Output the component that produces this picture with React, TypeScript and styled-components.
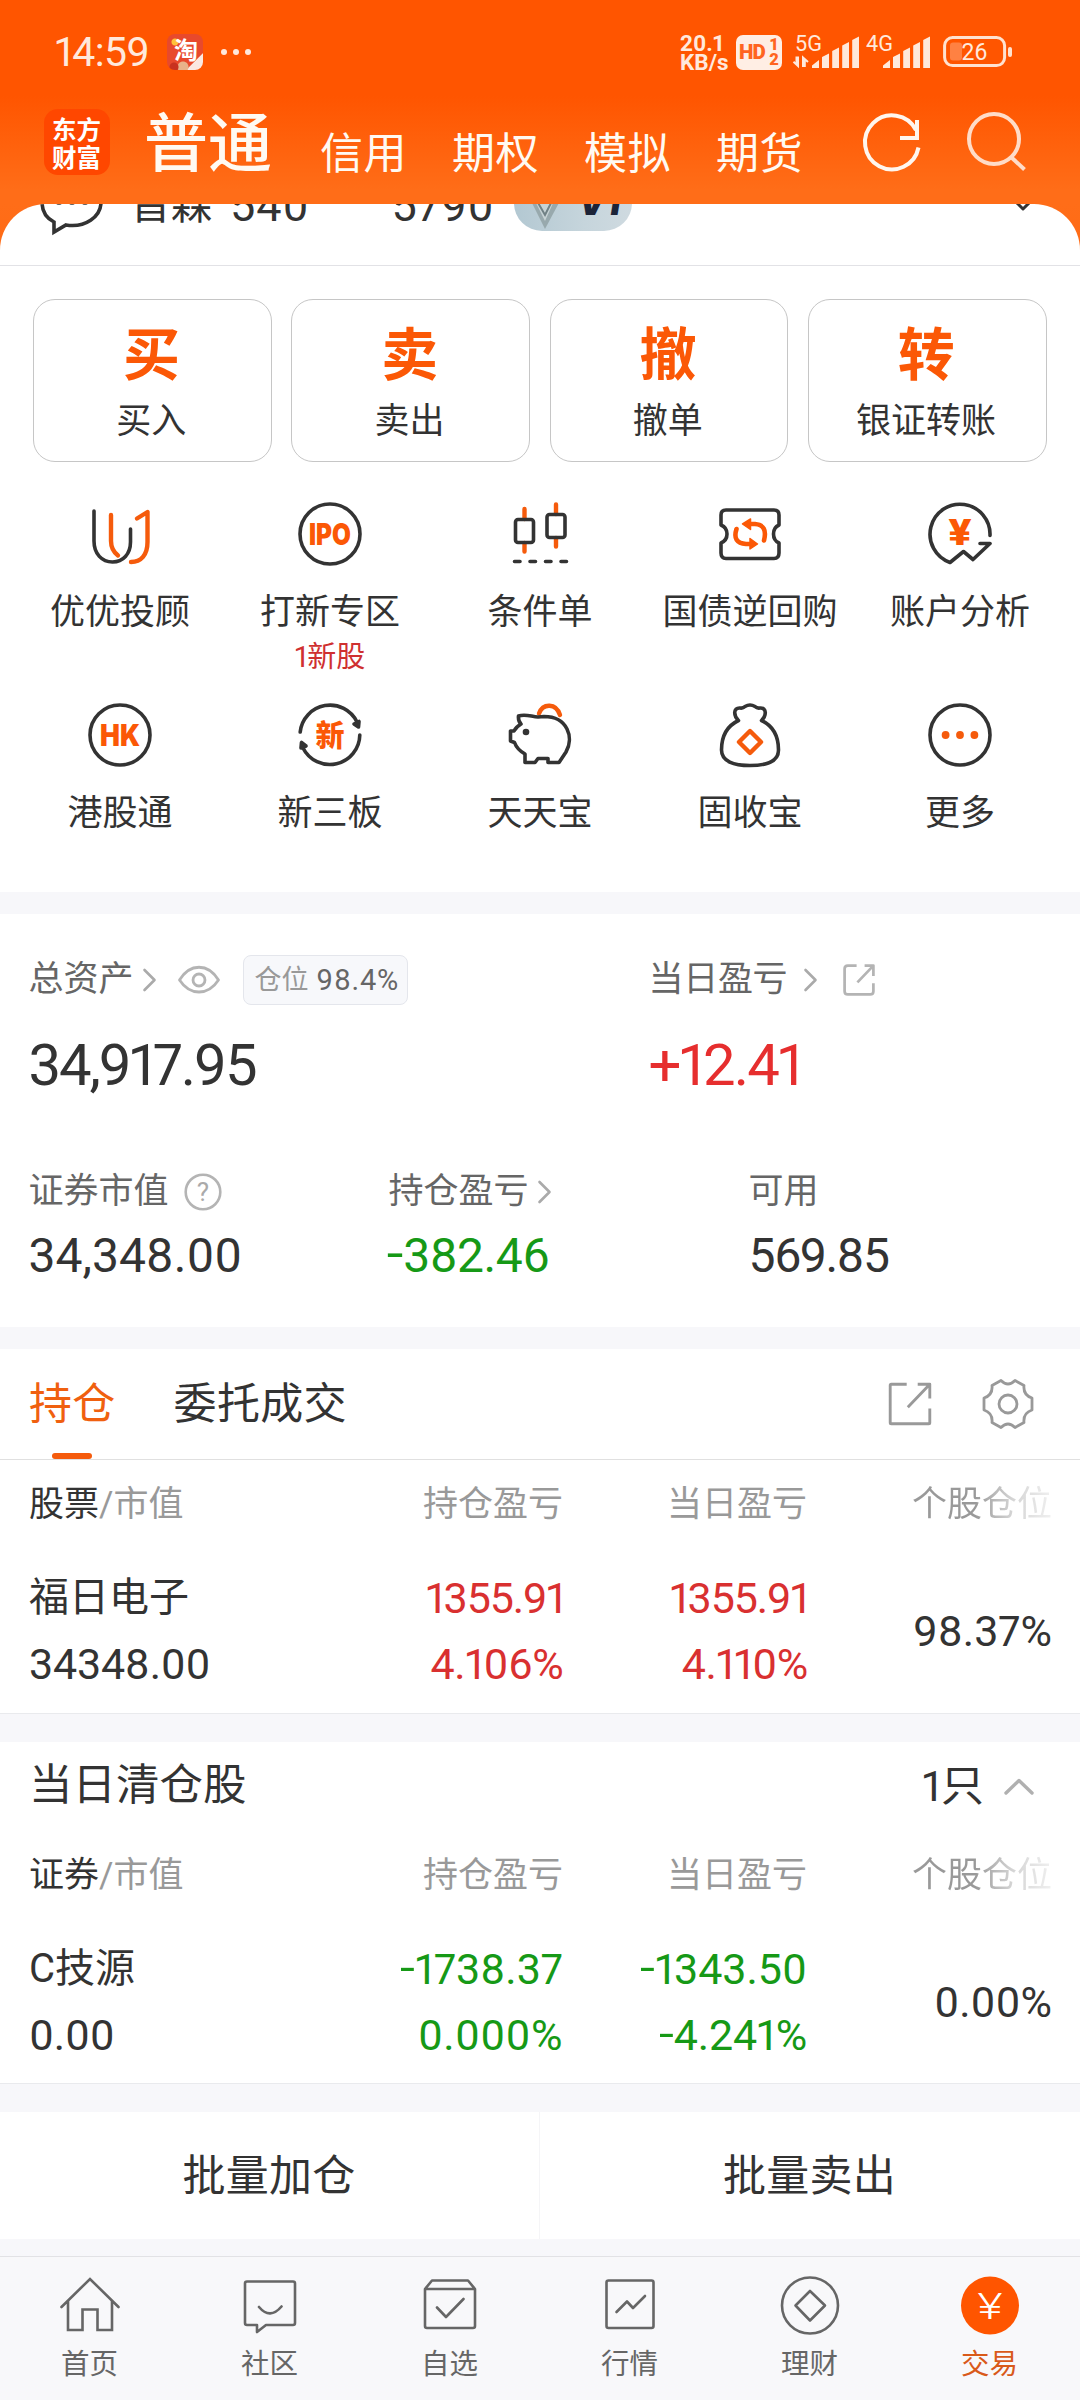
import React from 'react';
import styled, { createGlobalStyle } from 'styled-components';

const ORANGE = '#f55b0c';
const INK = '#333333';
const RED = '#d93030';
const GREEN = '#169916';
const SANS = "Roboto, 'Noto Sans CJK SC', sans-serif";

const GlobalStyle = createGlobalStyle`
  * { box-sizing: border-box; }
  body { margin: 0; background: #f7f7fa; }
  svg { display: block; flex: none; overflow: visible; }
`;

const Screen = styled.div`
  width: 1080px;
  height: 2400px;
  overflow: hidden;
  display: flex;
  flex-direction: column;
  background: #f7f7fa;
  font-family: ${SANS};
  font-variant-numeric: proportional-nums;
  color: ${INK};
  white-space: nowrap;
`;

/* ---------- generic text ---------- */
const Text = styled.span<{ $size?: number; $color?: string; $ls?: number; $weight?: number }>`
  font-size: ${p => p.$size ?? 35}px;
  line-height: 1.2;
  color: ${p => p.$color ?? INK};
  letter-spacing: ${p => p.$ls ?? 0}px;
  font-weight: ${p => p.$weight ?? 400};
`;
const MinusSign = styled.span`
  display: inline-block;
  transform: translateY(-0.04em) scaleX(1.25);
  transform-origin: 100% 50%;
  margin-left: 0.04em;
`;
const Signed = ({ children }: { children: string }) =>
  children.startsWith('-') ? <><MinusSign>-</MinusSign>{children.slice(1)}</> : <>{children}</>;

/* ---------- header ---------- */
const Header = styled.header`
  flex: none;
  background: linear-gradient(#ff5500 0, #ff5500 96px, #ff6d18 190px, #ff6d18 204px, #ff6a14 265px);
`;
const StatusBar = styled.div`
  height: 104px;
  padding: 0 68px 0 55px;
  display: flex;
  align-items: center;
  color: #ffe9dc;
`;
const Clock = styled.span`
  width: 112px;
  font-size: 41px;
  line-height: 48px;
  letter-spacing: -0.6px;
  color: #ffe9dc;
`;
const TaoBadge = styled.div`
  width: 36px;
  height: 36px;
  border-radius: 8px;
  overflow: hidden;
  background: radial-gradient(circle at 8px 8px, #ffc23a 0 3px, transparent 4px),
    radial-gradient(circle at 7px 33px, #c8321f 0 4px, transparent 5px),
    radial-gradient(circle at 16px 33px, #e8b28a 0 5px, transparent 6px),
    linear-gradient(135deg, #e8492c 0 76%, #fbe9e2 77%);
  color: #fff;
  font: 700 24px/29px 'Noto Sans CJK SC', sans-serif;
  text-align: right;
  padding-right: 5px;
`;
const Dots = styled.div`
  display: flex;
  gap: 6px;
  margin-left: 18px;
  i { width: 6px; height: 6px; border-radius: 3px; background: #ffe9dc; }
`;
const StatusRight = styled.div`
  margin-left: auto;
  display: flex;
  align-items: center;
`;
const Speed = styled.div`
  width: 56px;
  font-size: 22.5px;
  line-height: 19px;
  font-weight: 700;
  display: flex;
  flex-direction: column;
  padding-top: 2px;
`;
const HdBox = styled.div`
  width: 46px;
  height: 35px;
  margin-right: 11px;
  padding: 0 4px 0 3px;
  border-radius: 7px;
  background: #ffeee4;
  color: #ff6420;
  display: flex;
  align-items: center;
  justify-content: space-between;
  font: 900 20.5px/34px Roboto, sans-serif;
  letter-spacing: -0.8px;
`;
const HdStack = styled.span`
  display: flex;
  flex-direction: column;
  font-size: 16.5px;
  line-height: 15px;
`;

const NavBar = styled.nav`
  height: 100px;
  padding-left: 44px;
  display: flex;
  align-items: flex-start;
`;
const Logo = styled.div`
  width: 66px;
  height: 66px;
  margin-top: 5px;
  padding: 6px 0 0 8px;
  border-radius: 14px;
  background: #ff4700;
  color: #fff;
  font: 700 24.5px/27.5px 'Noto Sans CJK SC', sans-serif;
  display: flex;
  flex-direction: column;
`;
const NavMain = styled.span`
  margin: 3px 0 0 34px;
  width: 176px;
  font-size: 64px;
  line-height: 76px;
  font-weight: 500;
  color: #fffaf2;
`;
const NavTabs = styled.div`
  margin-top: 24px;
  display: flex;
  gap: 45px;
`;
const NavTab = styled.span`
  width: 87px;
  font-size: 43px;
  line-height: 52px;
  letter-spacing: 0.5px;
  color: #fffaf2;
`;
const NavIcons = styled.div`
  display: flex;
  margin: 8px 0 0 59px;
  gap: 42px;
`;

/* ---------- account strip (scrolled beneath the header) ---------- */
const Sheet = styled.div`
  height: 62px;
  border-radius: 46px 46px 0 0;
  background: #fff;
  border-bottom: 1px solid #e2e2e6;
  overflow: hidden;
`;
const AccountRow = styled.div`
  height: 60px;
  margin-top: -28px;
  padding: 0 45px 0 40px;
  display: flex;
  align-items: center;
`;
const VipTag = styled.div`
  width: 118px;
  height: 56px;
  margin: -7px 0 0 20px;
  padding: 0 0 0 16px;
  border-radius: 28px;
  background: linear-gradient(90deg, #b3c8d2, #c6d5dc 60%, #cfdae0);
  display: flex;
  align-items: center;
  gap: 16px;
  color: #1c2438;
  font: italic 900 34px/58px Inter, sans-serif;
`;

/* ---------- quick trade ---------- */
const Panel = styled.section`
  flex: none;
  background: #fff;
`;
const QuickPanel = styled(Panel)`
  height: 626px;
  padding-top: 33px;
`;
const TradeCards = styled.div`
  padding: 0 33.5px 0 33px;
  display: grid;
  grid-template-columns: repeat(4, 1fr);
  gap: 19.5px;
`;
const TradeCard = styled.button`
  height: 163px;
  padding: 21px 2px 0 0;
  border: 1px solid #c6c6c6;
  border-radius: 22px;
  background: #fff;
  display: flex;
  flex-direction: column;
  align-items: center;
  font-family: ${SANS};
`;
const TradeGlyph = styled.span`
  font-size: 57px;
  line-height: 70px;
  font-weight: 700;
  color: #fb5806;
`;
const TradeName = styled.span`
  margin-top: 10px;
  font-size: 35px;
  line-height: 42px;
  color: ${INK};
`;
const ServiceGrid = styled.div`
  margin: 40px 15px 0;
  display: grid;
  grid-template-columns: repeat(5, 210px);
  grid-auto-rows: 201px;
`;
const Service = styled.div`
  display: flex;
  flex-direction: column;
  align-items: center;
`;
const ServiceName = styled.span`
  margin-top: 26px;
  font-size: 35px;
  line-height: 42px;
`;
const ServiceNote = styled.span`
  margin-top: 6px;
  font-size: 29px;
  line-height: 34px;
  color: #cf3030;
`;

/* ---------- assets ---------- */
const AssetPanel = styled(Panel)`
  height: 413px;
  margin-top: 22px;
  padding: 41px 30px 0 28.5px;
`;
const AssetTop = styled.div`
  display: grid;
  grid-template-columns: 620px 1fr;
`;
const AssetTriple = styled.div`
  margin-top: 70px;
  display: grid;
  grid-template-columns: repeat(3, 360px);
`;
const LabelRow = styled.div<{ $h: number }>`
  height: ${p => p.$h}px;
  display: flex;
  align-items: center;
`;
const Gap = styled.span<{ $w: number }>`
  flex: none;
  width: ${p => p.$w}px;
`;
const Spring = styled.span`
  flex: 1;
`;
const PositionTag = styled.span`
  height: 50px;
  width: 165px;
  padding-left: 11px;
  border: 1px solid #e4e6ec;
  border-radius: 8px;
  background: #f7f8fb;
  display: flex;
  align-items: center;
  gap: 8px;
`;
const BigValue = styled.div<{ $color?: string; $ls?: number }>`
  margin-top: 24px;
  font-size: 58px;
  line-height: 72px;
  letter-spacing: ${p => p.$ls ?? 0}px;
  color: ${p => p.$color ?? INK};
`;
const MidValue = styled.div<{ $color?: string; $ls?: number }>`
  margin-top: 13px;
  font-size: 48px;
  line-height: 60px;
  letter-spacing: ${p => p.$ls ?? 0}px;
  color: ${p => p.$color ?? INK};
`;

/* ---------- holdings ---------- */
const TabPanel = styled(Panel)`
  height: 111px;
  margin-top: 22px;
  padding: 0 46px 0 29px;
  border-bottom: 1px solid #e0e0e0;
  display: flex;
`;
const Tab = styled.div<{ $active?: boolean }>`
  height: 110px;
  padding-top: 29px;
  margin-right: 58px;
  display: flex;
  flex-direction: column;
  align-items: center;
  font-size: 43px;
  line-height: 52px;
  letter-spacing: 0.3px;
  color: ${p => (p.$active ? '#f0600f' : INK)};
  &::after {
    content: '';
    display: ${p => (p.$active ? 'block' : 'none')};
    margin-top: 23px;
    width: 40px;
    height: 6px;
    border-radius: 3px;
    background: ${ORANGE};
  }
`;
const TabTools = styled.div`
  margin-left: auto;
  padding-top: 3px;
  display: flex;
  align-items: center;
  gap: 50px;
  height: 106px;
`;
const TablePanel = styled(Panel)<{ $h: number; $top?: number }>`
  height: ${p => p.$h}px;
  margin-top: ${p => p.$top ?? 0}px;
  padding: 0 28px 0 29px;
  border-bottom: 1px solid #e9eaed;
`;
const TableRow = styled.div<{ $h: number }>`
  height: ${p => p.$h}px;
  display: grid;
  grid-template-columns: 244px 290px 244px 245px;
  align-items: center;
`;
const Cell = styled.div<{ $right?: boolean }>`
  display: flex;
  flex-direction: column;
  text-align: ${p => (p.$right ? 'right' : 'left')};
`;
const Line = styled.span<{ $size?: number; $color?: string; $ls?: number }>`
  font-size: ${p => p.$size ?? 43}px;
  line-height: 66px;
  letter-spacing: ${p => p.$ls ?? 0}px;
  margin-right: ${p => p.$ls ?? 0}px;
  color: ${p => p.$color ?? INK};
`;
const Head = styled.span<{ $fade?: boolean }>`
  font-size: 35px;
  line-height: 42px;
  color: #999;
  ${p => p.$fade && `
    background: linear-gradient(90deg, #999 0, #999 168px, #d4d4d4 205px, #f0f0f0 100%);
    background-clip: text;
    -webkit-text-fill-color: transparent;
  `}
  b { font-weight: 400; color: ${INK}; }
`;
const ClearedTitle = styled.div`
  height: 89px;
  display: flex;
  align-items: center;
  justify-content: space-between;
  padding-right: 18px;
`;
const ClearedCount = styled.div`
  display: flex;
  align-items: center;
  gap: 20px;
`;

/* ---------- batch buttons & tab bar ---------- */
const BatchRow = styled.div`
  flex: none;
  height: 127px;
  margin-top: 28px;
  background: #fff;
  display: grid;
  grid-template-columns: 540px 540px;
`;
const BatchButton = styled.button`
  border: 0;
  border-right: 1px solid #f5f5f7;
  background: none;
  padding: 0 1px 7px 0;
  font-family: ${SANS};
  font-size: 43px;
  letter-spacing: 0.2px;
  color: ${INK};
  &:last-child { border-right: 0; }
`;
const TabBar = styled.footer`
  flex: none;
  height: 144px;
  margin-top: 17px;
  border-top: 1px solid #e2e2e5;
  background: #f8f8fa;
  display: grid;
  grid-template-columns: repeat(6, 180px);
`;
const TabBarItem = styled.div<{ $active?: boolean }>`
  padding: 19px 1px 0 0;
  display: flex;
  flex-direction: column;
  align-items: center;
  gap: 12px;
  font-size: 28.5px;
  line-height: 34px;
  color: ${p => (p.$active ? '#d95a1a' : '#666')};
`;

/* ---------- icons ---------- */
const Svg = ({ w = 64, h = w, children, sw = 3.6, color = INK }: any) => (
  <svg width={w} height={h} viewBox={`0 0 ${w} ${h}`} fill="none" stroke={color} strokeWidth={sw} strokeLinecap="round" strokeLinejoin="round">
    {children}
  </svg>
);
const Letters = ({ y, size, len, weight = 900, children, fill = '#fb5806', family = 'Inter, sans-serif' }: any) => (
  <text x="32" y={y} textAnchor="middle" fontFamily={family} fontWeight={weight} fontSize={size} textLength={len} lengthAdjust="spacingAndGlyphs" fill={fill} stroke="none">
    {children}
  </text>
);
const Chevron = ({ color = '#aaa' }) => (
  <Svg w={13} h={22} sw={2.6} color={color}><path d="M1.5 1L11.5 11L1.5 21" /></Svg>
);
const Signal = ({ label, arrows }: { label: string; arrows?: boolean }) => (
  <svg width="70.5" height="36" viewBox="0 0 70.5 36" fill="#ffe9dc">
    <text x="2" y="16.5" fontFamily="Roboto" fontSize="21.5" textLength="27" lengthAdjust="spacingAndGlyphs">{label}</text>
    {arrows && <path d="M5 22.5V32L0.5 27.8M3.5 31V22.5M10 33V23.5L15 28M11.8 25V33" stroke="#ffe9dc" strokeWidth="2" fill="none" />}
    <path d="M19 34V31.5L26 26V34ZM29 34V23L36 19.5V34ZM39.2 34V17L46 13.5V34ZM49.2 34V11.5L56 8V34ZM59.2 34V6L66 2.5V34Z" />
  </svg>
);
const Battery = () => (
  <svg width="69" height="32" viewBox="0 0 69 32" fill="none">
    <rect x="1.6" y="1.6" width="60" height="28" rx="8" stroke="#ffe2d0" strokeWidth="3" />
    <rect x="7" y="6.5" width="12" height="18" rx="3" fill="#ff8142" />
    <rect x="65" y="11" width="4" height="10" rx="2" fill="#ffe2d0" />
    <text x="18.5" y="24" fontFamily="Roboto" fontSize="23" textLength="26" fill="#ffe9dc">26</text>
  </svg>
);
const Share = ({ s, color, sw, r }: { s: number; color: string; sw: number; r: number }) => (
  <svg width={s} height={s} viewBox="0 0 40 40" fill="none" stroke={color} strokeWidth={sw} strokeLinejoin="round">
    <path d={`M17 2H${2 + r}Q2 2 2 ${2 + r}V${38 - r}Q2 38 ${2 + r} 38H${38 - r}Q38 38 38 ${38 - r}V24M27 2H38V15M38 2L18 23`} />
  </svg>
);

const serviceIcons: Record<string, React.ReactNode> = {
  uu: (
    <Svg>
      <path d="M6 9V39C6 52 14 60 24.5 60S42.5 52 42.5 40V27" />
      <path d="M23 13V39C23 46 25.5 50 30 53.5" stroke={ORANGE} strokeWidth="4.4" />
      <path d="M49 16.5L59.5 10V40C59.5 53 53 60 43 60" stroke={ORANGE} strokeWidth="4.4" />
    </Svg>
  ),
  ipo: <Svg><circle cx="32" cy="32" r="30" /><Letters y="43" size="30" len="42">IPO</Letters></Svg>,
  candle: (
    <Svg>
      <path d="M16.5 7V17M16.5 41V49.5M48 2.5V12M48 36V44.5" stroke={ORANGE} strokeWidth="4.4" />
      <rect x="7.5" y="17.5" width="18" height="23" rx="2.5" />
      <rect x="39" y="12.5" width="18" height="23" rx="2.5" />
      <path d="M6.5 59.5H12M22 59.5H27.5M37.5 59.5H43M53 59.5H58.5" />
    </Svg>
  ),
  ticket: (
    <Svg>
      <path d="M8 8H56Q61 8 61 13V23Q55.5 25.5 55.5 32T61 41V51Q61 56.5 56 56.5H8Q3 56.5 3 51V41Q9 38.5 9 32T3 23V13Q3 8 8 8Z" />
      <path d="M46 38.5Q50 23 37 22H31M18.5 27Q14 41 28 42H33" stroke="#fb5806" strokeWidth="4.6" />
      <path d="M24.5 22L32.5 17V27.5ZM39.5 42L32 36.5V47Z" fill="#fb5806" stroke="#fb5806" strokeWidth="1.5" />
    </Svg>
  ),
  account: (
    <Svg>
      <path d="M62 33.5A30 30 0 1 0 22 60.5L35.5 49.5L45 57.5L62 41.5H52" />
      <Letters y="43" size="37" len="23" weight={900} family="Roboto">¥</Letters>
    </Svg>
  ),
  hk: <Svg><circle cx="32" cy="32" r="30" /><Letters y="43" size="30" len="40">HK</Letters></Svg>,
  neeq: (
    <Svg>
      <path d="M2.2 29A30 30 0 0 1 59 19M61.8 32A30 30 0 0 1 5 45" />
      <path d="M56 21L61 18.5L60.5 24ZM3.5 39.5L3 45L8 43Z" fill={INK} />
      <Letters y="43" size="30" len="29" weight={900} family="Noto Sans CJK SC">新</Letters>
    </Svg>
  ),
  pig: (
    <Svg>
      <path d="M31 10.5C35 0 48 0 52 12" stroke={ORANGE} strokeWidth="4.4" />
      <path d="M30 14C24 14 18 10.5 10.5 13Q10 18 13 21Q8 24 6 28H2.5V38L6.5 39.5Q9 46.5 17 51V59.5H27L30 55.5H40V59.5H51L58 49C66 35 60 13.5 36 13.5Z" />
      <circle cx="18" cy="29" r="3.3" fill={INK} stroke="none" />
    </Svg>
  ),
  bag: (
    <Svg>
      <path d="M20.5 17.5C15.5 13 15 4.5 22 5Q25 5.5 27 3.5Q32 0.5 37 3.5Q39 5.5 42 5C49 4.5 48.5 13 43.5 17.5C54 22.5 60.5 32 60.5 47C60.5 58.5 48 62.5 32 62.5S3.5 58.5 3.5 47C3.5 32 10 22.5 20.5 17.5" />
      <path d="M32 28L43 39L32 50L21 39Z" stroke={ORANGE} strokeWidth="4.4" />
    </Svg>
  ),
  more: (
    <Svg>
      <circle cx="32" cy="32" r="30" />
      <g fill={ORANGE} stroke="none"><circle cx="17.6" cy="32" r="3.9" /><circle cx="32" cy="32" r="3.9" /><circle cx="46.4" cy="32" r="3.9" /></g>
    </Svg>
  ),
};

const barIcons: Record<string, React.ReactNode> = {
  home: <Svg w={60} sw={2.6} color="#666"><path d="M1.5 31L30 3L58.5 31M8 25V54H22.5V33.5H37.5V54H52V25" strokeLinejoin="miter" /></Svg>,
  chat: <Svg w={60} sw={2.6} color="#666"><path d="M7 5.5H53Q55 5.5 55 7.5V47Q55 49 53 49H26L17 56V49H7Q5 49 5 47V7.5Q5 5.5 7 5.5ZM19 31Q30 44 41.5 30.5" /></Svg>,
  pick: <Svg w={60} sw={2.6} color="#666"><path d="M5 13L12 4.5H48L55 13V50Q55 52 53 52H7Q5 52 5 50ZM5 13H55M17 31.5L26 41L43.5 23" /></Svg>,
  chart: <Svg w={60} sw={2.6} color="#666"><rect x="6.5" y="4.5" width="47" height="47.5" rx="2" /><path d="M16.5 36L27 25.5L33 32L45 20" /></Svg>,
  wealth: <Svg w={60} sw={2.6} color="#666"><circle cx="30" cy="29.5" r="28" /><path d="M30 15L45 29.5L30 44.5L15.5 29.5Z" /></Svg>,
  trade: (
    <svg width="60" height="60" viewBox="0 0 60 60">
      <circle cx="30" cy="29.5" r="29" fill="#ff5500" />
      <text x="30" y="43" textAnchor="middle" fontFamily="Roboto" fontSize="37" fontWeight="300" fill="#fff" textLength="25" lengthAdjust="spacingAndGlyphs">¥</text>
    </svg>
  ),
};

/* ---------- data ---------- */
const trades = [['买', '买入'], ['卖', '卖出'], ['撤', '撤单'], ['转', '银证转账']];
const services = [
  { icon: 'uu', name: '优优投顾' },
  { icon: 'ipo', name: '打新专区', note: '1新股' },
  { icon: 'candle', name: '条件单' },
  { icon: 'ticket', name: '国债逆回购' },
  { icon: 'account', name: '账户分析' },
  { icon: 'hk', name: '港股通' },
  { icon: 'neeq', name: '新三板' },
  { icon: 'pig', name: '天天宝' },
  { icon: 'bag', name: '固收宝' },
  { icon: 'more', name: '更多' },
];
const tabs = [
  ['home', '首页'], ['chat', '社区'], ['pick', '自选'],
  ['chart', '行情'], ['wealth', '理财'], ['trade', '交易'],
];

type Amount = [value: string, tracking: number];
type Position = { name: string; value: string; hold: Amount[]; day: Amount[]; ratio: string; color: string };

const TableHead = ({ first }: { first: string }) => (
  <TableRow $h={90}>
    <Head><b>{first}</b>/市值</Head>
    <Cell $right><Head>持仓盈亏</Head></Cell>
    <Cell $right><Head>当日盈亏</Head></Cell>
    <Cell $right><Head $fade>个股仓位</Head></Cell>
  </TableRow>
);
const Amounts = ({ items, color }: { items: Amount[]; color: string }) => (
  <Cell $right>
    {items.map(([v, ls]) => <Line key={v} $color={color} $ls={ls}><Signed>{v}</Signed></Line>)}
  </Cell>
);
const PositionRow = ({ name, value, hold, day, ratio, color }: Position) => (
  <TableRow $h={161}>
    <Cell><Line $size={40}>{name}</Line><Line $ls={-0.2}>{value}</Line></Cell>
    <Amounts items={hold} color={color} />
    <Amounts items={day} color={color} />
    <Cell $right><Line>{ratio}</Line></Cell>
  </TableRow>
);

export default function App() {
  return (
    <Screen>
      <GlobalStyle />
      <Header>
        <StatusBar>
          <Clock>14:59</Clock>
          <TaoBadge>淘</TaoBadge>
          <Dots><i /><i /><i /></Dots>
          <StatusRight>
            <Speed><span>20.1</span><span>KB/s</span></Speed>
            <HdBox>HD<HdStack><span>1</span><span>2</span></HdStack></HdBox>
            <Signal label="5G" arrows />
            <Signal label="4G" />
            <Gap $w={9} />
            <Battery />
          </StatusRight>
        </StatusBar>
        <NavBar>
          <Logo><span>东方</span><span>财富</span></Logo>
          <NavMain>普通</NavMain>
          <NavTabs>
            {['信用', '期权', '模拟', '期货'].map(t => <NavTab key={t}>{t}</NavTab>)}
          </NavTabs>
          <NavIcons>
            <svg width="60" height="60" viewBox="0 0 60 60" fill="none" stroke="#fff6ee" strokeWidth="4">
              <path d="M56.5 35.5A27 27 0 1 1 54 18M55 8V26H38" />
            </svg>
            <svg width="64" height="60" viewBox="0 0 64 60" fill="none" stroke="#ffdcc8" strokeWidth="4">
              <circle cx="30" cy="27" r="25" /><path d="M47 45L60.5 57.5" />
            </svg>
          </NavIcons>
        </NavBar>
        <Sheet>
          <AccountRow>
            <Svg w={64} h={60}>
              <path d="M14 48V56L26 49C45 52 61 41 61 26C61 11 48 2 32 2S2 11 2 26C2 36 6 42 14 46Z" strokeLinejoin="miter" />
              <path d="M18 27H20M31 27H33M44 27H46" />
            </Svg>
            <Gap $w={26} />
            <Text $size={41}>晋森</Text>
            <Gap $w={18} />
            <Text $size={45} $ls={0.9}>540</Text>
            <Gap $w={82} />
            <Text $size={45} $ls={0.6}>5790</Text>
            <VipTag>
              <svg width="32" height="56" viewBox="0 0 32 56">
                <path d="M0 24H31L15 54Z" fill="#98a9ad" />
                <path d="M5 26H24L15 46Z" fill="#c7d3d5" />
                <path d="M7 26L15 40L22 26" fill="none" stroke="#708185" strokeWidth="2" />
              </svg>
              V1
            </VipTag>
            <Spring />
            <Svg w={24} h={16} sw={3}><path d="M2 1L12 11L22 1" /></Svg>
          </AccountRow>
        </Sheet>
      </Header>

      <QuickPanel>
        <TradeCards>
          {trades.map(([glyph, name]) => (
            <TradeCard key={name}><TradeGlyph>{glyph}</TradeGlyph><TradeName>{name}</TradeName></TradeCard>
          ))}
        </TradeCards>
        <ServiceGrid>
          {services.map(s => (
            <Service key={s.name}>
              {serviceIcons[s.icon]}
              <ServiceName>{s.name}</ServiceName>
              {s.note && <ServiceNote>{s.note}</ServiceNote>}
            </Service>
          ))}
        </ServiceGrid>
      </QuickPanel>

      <AssetPanel>
        <AssetTop>
          <div>
            <LabelRow $h={50}>
              <Text $color="#666">总资产</Text>
              <Gap $w={9} /><Chevron /><Gap $w={22} />
              <Svg w={42} h={30} sw={2.8} color="#b4b4b4">
                <path d="M1.5 15C12 -2 30 -2 40.5 15C30 31 12 31 1.5 15Z" /><circle cx="21" cy="15" r="6" />
              </Svg>
              <Gap $w={23} />
              <PositionTag>
                <Text $size={27} $color="#999">仓位</Text>
                <Text $size={29} $color="#666" $ls={0.8}>98.4%</Text>
              </PositionTag>
            </LabelRow>
            <BigValue $ls={-2.1}>34,917.95</BigValue>
          </div>
          <div>
            <LabelRow $h={50}>
              <Text $color="#666" $ls={-0.3}>当日盈亏</Text>
              <Gap $w={17} /><Chevron /><Gap $w={26} />
              <Share s={32} color="#b4b4b4" sw={3.4} r={4} />
            </LabelRow>
            <BigValue $color="#e62e2e" $ls={-1.8}>+12.41</BigValue>
          </div>
        </AssetTop>
        <AssetTriple>
          <div>
            <LabelRow $h={42}>
              <Text $color="#666">证券市值</Text>
              <Gap $w={15} />
              <Svg w={38} sw={2.6} color="#b4b4b4">
                <circle cx="19" cy="19" r="17.3" />
                <text x="19" y="28" textAnchor="middle" fontFamily="Roboto" fontSize="26" fill="#aaa" stroke="none">?</text>
              </Svg>
            </LabelRow>
            <MidValue>34,348.00</MidValue>
          </div>
          <div>
            <LabelRow $h={42}><Text $color="#666">持仓盈亏</Text><Gap $w={9} /><Chevron /></LabelRow>
            <MidValue $color={GREEN} $ls={-0.5}><Signed>-382.46</Signed></MidValue>
          </div>
          <div>
            <LabelRow $h={42}><Text $color="#666">可用</Text></LabelRow>
            <MidValue $ls={-1.6}>569.85</MidValue>
          </div>
        </AssetTriple>
      </AssetPanel>

      <TabPanel>
        <Tab $active>持仓</Tab>
        <Tab>委托成交</Tab>
        <TabTools>
          <Share s={44} color="#999" sw={2.6} r={1} />
          <Svg w={52} sw={2.8} color="#999">
            <path d="M19 2.5Q26 9.5 33 2.5L42 7.5Q41 17 50 20V32Q41 35 42 44.5L33 49.5Q26 42.5 19 49.5L10 44.5Q11 35 2 32V20Q11 17 10 7.5Z" />
            <circle cx="26" cy="26" r="9" />
          </Svg>
        </TabTools>
      </TabPanel>
      <TablePanel $h={254}>
        <TableHead first="股票" />
        <PositionRow
          name="福日电子" value="34348.00" ratio="98.37%" color={RED}
          hold={[['1355.91', -1.1], ['4.106%', -0.4]]}
          day={[['1355.91', -1.1], ['4.110%', -0.6]]}
        />
      </TablePanel>

      <TablePanel $h={342} $top={28}>
        <ClearedTitle>
          <Text $size={43.5}>当日清仓股</Text>
          <ClearedCount>
            <Text $size={43}>1只</Text>
            <Svg w={30} h={17} sw={3.4} color="#b0b0b0"><path d="M2 15L15 2.5L28 15" /></Svg>
          </ClearedCount>
        </ClearedTitle>
        <TableHead first="证券" />
        <PositionRow
          name="C技源" value="0.00" ratio="0.00%" color={GREEN}
          hold={[['-1738.37', 0], ['0.000%', 0.3]]}
          day={[['-1343.50', 0], ['-4.241%', -0.1]]}
        />
      </TablePanel>

      <BatchRow>
        <BatchButton>批量加仓</BatchButton>
        <BatchButton>批量卖出</BatchButton>
      </BatchRow>
      <TabBar>
        {tabs.map(([icon, name]) => (
          <TabBarItem key={name} $active={icon === 'trade'}>{barIcons[icon]}{name}</TabBarItem>
        ))}
      </TabBar>
    </Screen>
  );
}
